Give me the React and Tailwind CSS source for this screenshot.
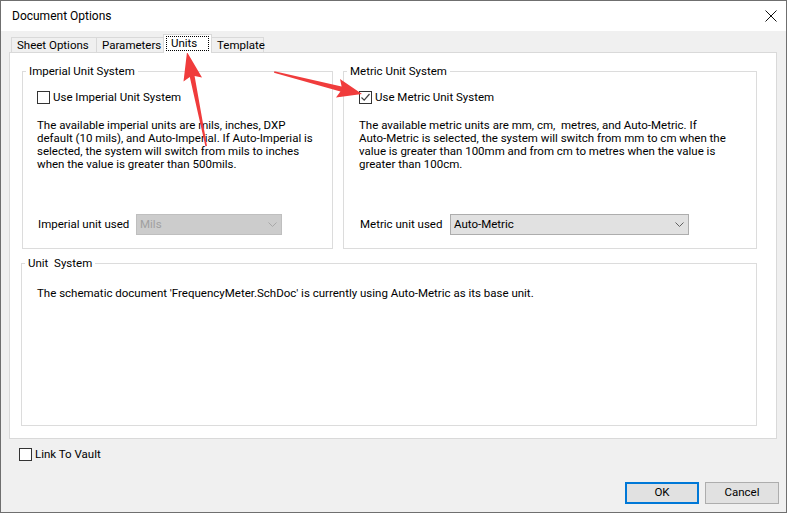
import React from 'react';

const Checkbox = ({ checked }) => (
  <span className="w-[13px] h-[13px] border border-[#333] bg-white flex items-center justify-center shrink-0">
    {checked && (
      <svg width="11" height="11" viewBox="0 0 11 11">
        <path d="M1.5 5.5 L4.2 8.2 L9.5 2" fill="none" stroke="#444" strokeWidth="1.2" />
      </svg>
    )}
  </span>
);

const Chevron = ({ color }) => (
  <svg width="9" height="5" viewBox="0 0 9 5">
    <path d="M0.5 0.5 L4.5 4.5 L8.5 0.5" fill="none" stroke={color} strokeWidth="1" />
  </svg>
);

const Select = ({ value, disabled, width }) => (
  <div
    className={`h-[21px] flex items-center justify-between pl-[3px] pr-[4px] border ${
      disabled ? 'bg-[#cccccc] border-[#bfbfbf] text-[#a0a0a0]' : 'bg-[#e1e1e1] border-[#adadad] text-black'
    }`}
    style={{ width }}
  >
    <span>{value}</span>
    <Chevron color={disabled ? '#a8a8a8' : '#606060'} />
  </div>
);

const Tab = ({ label, width, selected }) => (
  <div
    className={`-ml-px first:ml-0 border border-b-0 border-[#d9d9d9] leading-[14px] ${
      selected ? 'h-[19px] bg-white relative z-10 -mb-px pt-[1px] px-[2px]' : 'h-[15px] bg-[#f0f0f0] pl-[5px]'
    }`}
    style={{ width }}
  >
    {selected ? (
      <div className="border border-dotted border-black h-[15px] pl-[4px] leading-[13px]">{label}</div>
    ) : (
      label
    )}
  </div>
);

// group box: legend sits on the top border
const Group = ({ title, className, pad, children }) => (
  <fieldset className={`border border-[#dcdcdc] ${className}`}>
    <legend className="ml-[3px] px-[3px] leading-[16px] whitespace-pre">{title}</legend>
    <div style={{ paddingLeft: pad }}>{children}</div>
  </fieldset>
);

export default function App() {
  return (
    <div className="w-[787px] h-[513px] relative overflow-hidden border border-[#6f6f6f] bg-[#f0f0f0] text-black text-[11.5px] font-[Roboto,sans-serif] flex flex-col">
      {/* title bar */}
      <div className="h-[30px] bg-white flex items-center justify-between pl-[11px] pr-[9px]">
        <span className="text-[12px]">Document Options</span>
        <svg width="12" height="12" viewBox="0 0 12 12">
          <path d="M0.5 0.5 L11.5 11.5 M11.5 0.5 L0.5 11.5" stroke="#111" strokeWidth="1" />
        </svg>
      </div>

      {/* tabs */}
      <div className="h-[21px] flex items-end pl-[10px]">
        <Tab label="Sheet Options" width={86} />
        <Tab label="Parameters" width={68} />
        <Tab label="Units" width={49} selected />
        <Tab label="Template" width={53} />
      </div>

      {/* panel */}
      <div className="ml-[8px] w-[768px] h-[387px] bg-white border border-[#d9d9d9]">
        <div className="flex mt-[10px] ml-[12px]">
          <Group title="Imperial Unit System" className="w-[311px] h-[186px]" pad={14}>
            <label className="flex items-center gap-[3px] mt-[12px] h-[13px] leading-[13px]">
              <Checkbox />
              <span>Use Imperial Unit System</span>
            </label>
            <p className="mt-[15px] leading-[13px] whitespace-pre">
              The available imperial units are mils, inches, DXP{'\n'}
              default (10 mils), and Auto-Imperial. If Auto-Imperial is{'\n'}
              selected, the system will switch from mils to inches{'\n'}
              when the value is greater than 500mils.
            </p>
            <div className="flex items-center mt-[43px]">
              <span className="w-[99px] pl-[1px]">Imperial unit used</span>
              <Select value="Mils" disabled width={146} />
            </div>
          </Group>

          <Group title="Metric Unit System" className="ml-[10px] w-[414px] h-[186px]" pad={15}>
            <label className="flex items-center gap-[3px] mt-[12px] h-[13px] leading-[13px]">
              <Checkbox checked />
              <span>Use Metric Unit System</span>
            </label>
            <p className="mt-[15px] leading-[13px] whitespace-pre">
              The available metric units are mm, cm,  metres, and Auto-Metric. If{'\n'}
              Auto-Metric is selected, the system will switch from mm to cm when the{'\n'}
              value is greater than 100mm and from cm to metres when the value is{'\n'}
              greater than 100cm.
            </p>
            <div className="flex items-center mt-[43px]">
              <span className="w-[91px] pl-[1px]">Metric unit used</span>
              <Select value="Auto-Metric" width={239} />
            </div>
          </Group>
        </div>

        <Group title="Unit  System" className="mt-[6px] ml-[11px] w-[736px] h-[171px]" pad={15}>
          <p className="mt-[16px] leading-[13px]">
            The schematic document 'FrequencyMeter.SchDoc' is currently using Auto-Metric as its base unit.
          </p>
        </Group>
      </div>

      {/* footer */}
      <label className="flex items-center gap-[3px] mt-[9px] ml-[18px] h-[13px] leading-[13px]">
        <Checkbox />
        <span>Link To Vault</span>
      </label>

      <div className="flex justify-end gap-[6px] pr-[7px] mt-[21px]">
        <button className="w-[74px] h-[22px] bg-[#e1e1e1] border-2 border-[#0078d7]">OK</button>
        <button className="w-[74px] h-[22px] bg-[#e1e1e1] border border-[#adadad]">Cancel</button>
      </div>

      {/* red annotation arrows */}
      <svg className="absolute -left-px -top-px pointer-events-none" width="787" height="513" viewBox="0 0 787 513">
        <polygon
          points="187,52 202,77.5 194.6,76 207,146 205.4,146.3 189.8,77 183.5,81.4"
          fill="#f03c3c"
        />
        <polygon
          points="362,94 336,97.5 340.4,91.4 274,72.8 274.4,71.2 341.6,86.6 340,79"
          fill="#f03c3c"
        />
      </svg>
    </div>
  );
}
